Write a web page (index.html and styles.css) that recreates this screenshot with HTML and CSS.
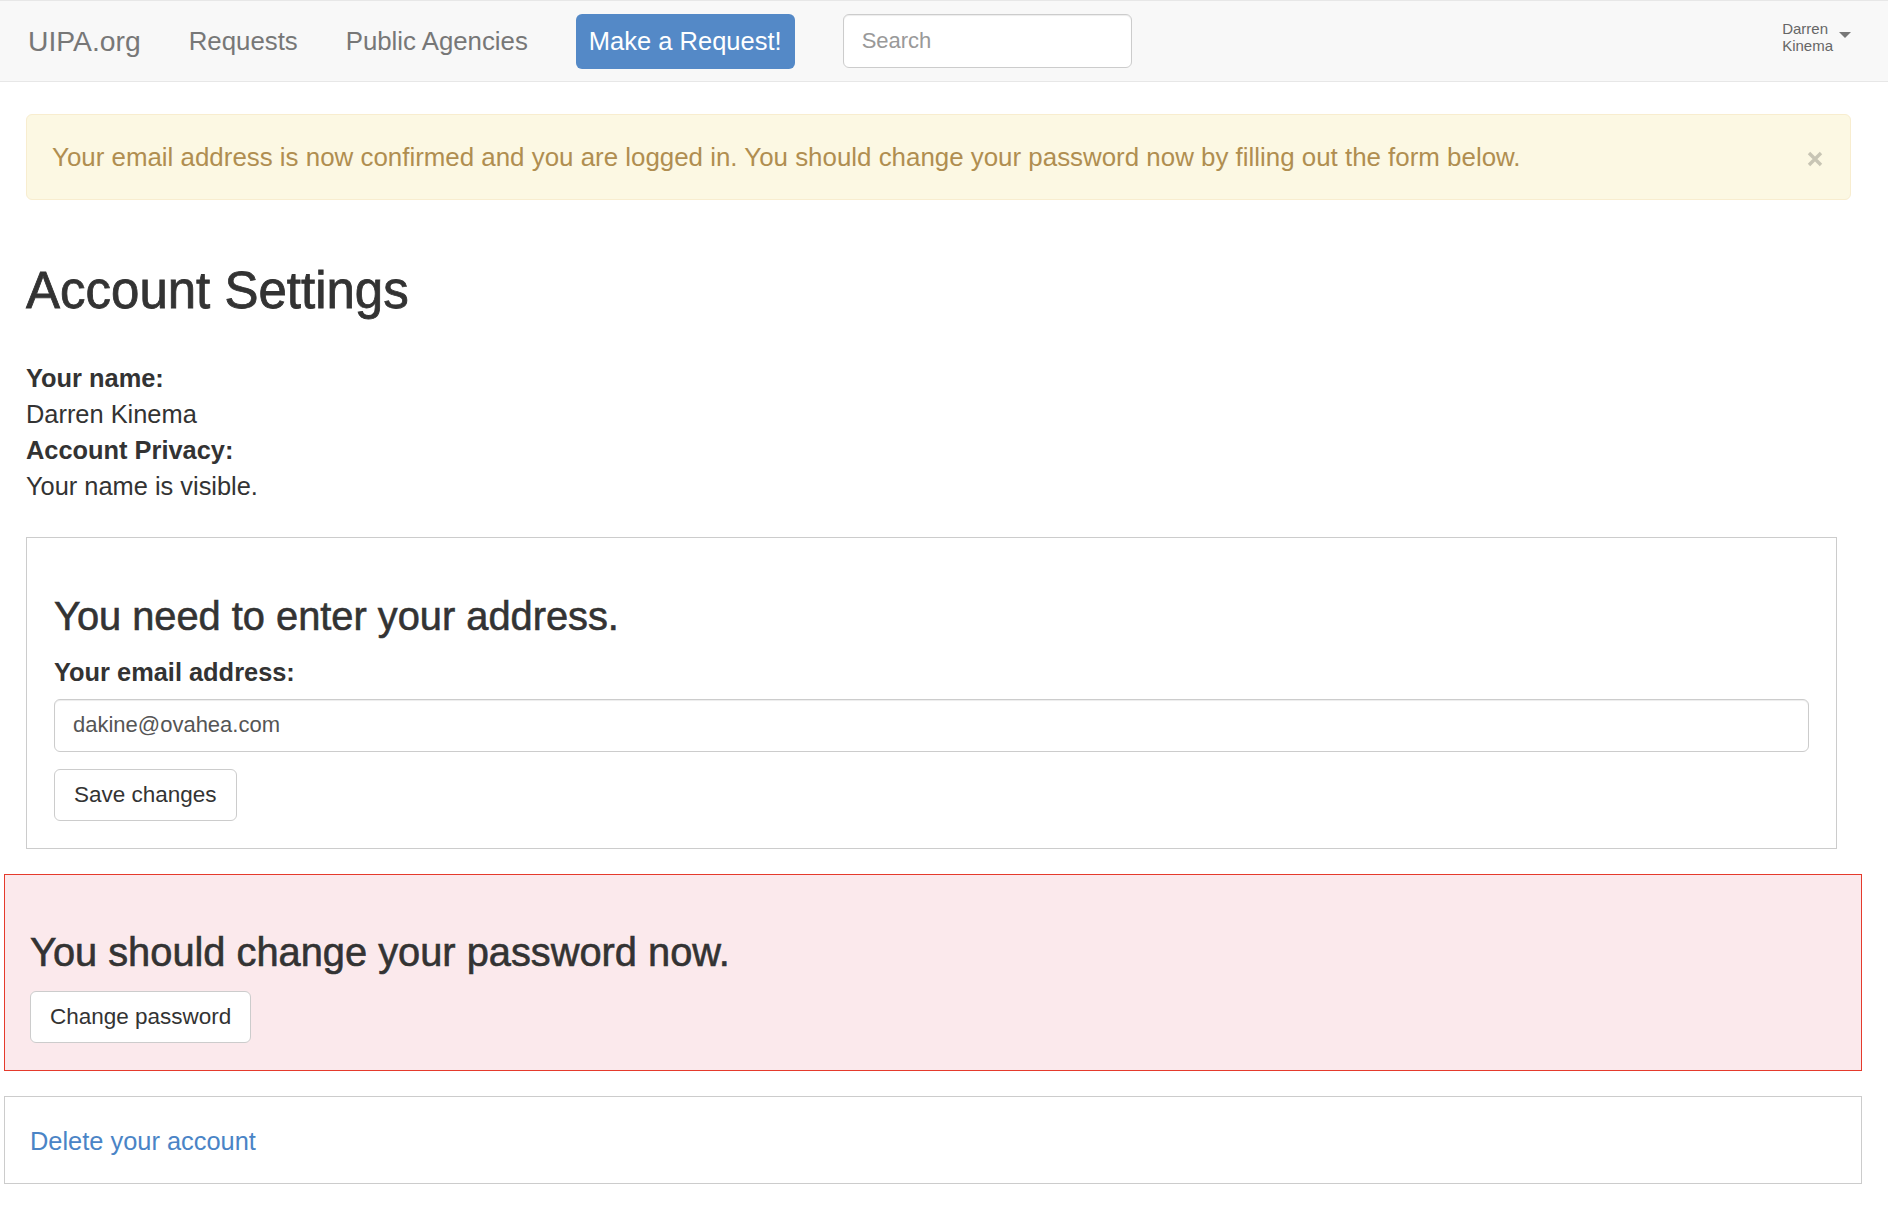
FILE: index.html
```html
<!DOCTYPE html>
<html lang="en">
<head>
<meta charset="utf-8">
<title>Account Settings - UIPA.org</title>
<link rel="stylesheet" href="styles.css">
</head>
<body>
<nav class="navbar">
  <a class="brand" href="#">UIPA.org</a>
  <ul class="nav-links">
    <li><a href="#">Requests</a></li>
    <li><a href="#">Public Agencies</a></li>
  </ul>
  <a class="btn-request" href="#">Make a Request!</a>
  <form class="search"><input class="search-input" type="text" placeholder="Search"></form>
  <div class="user">
    <span class="user-name">Darren<br>Kinema</span>
    <span class="caret"></span>
  </div>
</nav>
<main class="page">
  <div class="alert">
    <span class="alert-text">Your email address is now confirmed and you are logged in. You should change your password now by filling out the form below.</span>
    <button class="close" type="button" aria-label="Close">
      <svg width="16" height="16" viewBox="0 0 16 16"><path d="M2 2 L14 14 M14 2 L2 14" stroke="#000" stroke-width="3.4" stroke-linecap="butt"/></svg>
    </button>
  </div>
  <h1 class="page-title">Account Settings</h1>
  <div class="info">
    <div class="info-label">Your name:</div>
    <div>Darren Kinema</div>
    <div class="info-label">Account Privacy:</div>
    <div>Your name is visible.</div>
  </div>
  <section class="panel panel-address">
    <h3 class="panel-title">You need to enter your address.</h3>
    <label class="field-label" for="email">Your email address:</label>
    <input id="email" class="form-control" type="text" value="dakine@ovahea.com">
    <button class="btn btn-save" type="button">Save changes</button>
  </section>
  <section class="panel panel-danger">
    <h3 class="panel-title">You should change your password now.</h3>
    <button class="btn" type="button">Change password</button>
  </section>
  <section class="panel panel-delete">
    <a class="link" href="#">Delete your account</a>
  </section>
</main>
</body>
</html>
```

FILE: styles.css
```css
* { box-sizing: border-box; }

html, body {
  margin: 0;
  padding: 0;
  background: #fff;
}

body {
  font-family: "Liberation Sans", Arial, sans-serif;
  font-size: 25.4px;
  line-height: 36px;
  color: #333;
}

a { text-decoration: none; }

/* ---------- navbar ---------- */
.navbar {
  display: flex;
  align-items: center;
  gap: 48px;
  height: 82px;
  padding: 0 37px 0 28px;
  background: #f8f8f8;
  border-top: 1px solid #e7e7e7;
  border-bottom: 1px solid #e7e7e7;
}

.brand {
  font-size: 28.3px;
  line-height: 36px;
  color: #777;
}

.nav-links {
  display: flex;
  gap: 48px;
  margin: 0;
  padding: 0;
  list-style: none;
}

.nav-links a {
  font-size: 25.8px;
  line-height: 36px;
  color: #777;
}

.btn-request {
  display: flex;
  align-items: center;
  height: 55px;
  padding: 0 13px;
  font-size: 25.5px;
  color: #fff;
  background: #5489c7;
  border-radius: 6px;
}

.search { margin: 0; }

.search-input {
  display: block;
  width: 289px;
  height: 54px;
  padding: 0 18px;
  font-family: "Liberation Sans", Arial, sans-serif;
  font-size: 22px;
  color: #555;
  background: #fff;
  border: 1px solid #ccc;
  border-radius: 6px;
  box-shadow: inset 0 1px 1px rgba(0, 0, 0, 0.075);
  outline: none;
}

.search-input::placeholder { color: #999; }

.user {
  display: flex;
  align-self: flex-start;
  margin-top: 19px;
  margin-left: auto;
}

.user-name {
  font-size: 15px;
  line-height: 17px;
  color: #666;
}

.caret {
  width: 0;
  height: 0;
  margin-top: 12px;
  margin-left: 6px;
  border-top: 6px solid #777;
  border-left: 6px solid transparent;
  border-right: 6px solid transparent;
}

/* ---------- page ---------- */
.page {
  padding: 32px 37px 0 26px;
}

.alert {
  display: flex;
  align-items: center;
  justify-content: space-between;
  padding: 24px 27px 24px 25px;
  font-size: 25.9px;
  color: #b08e50;
  background: #fcf8e3;
  border: 1px solid #f8edcf;
  border-radius: 6px;
}

.close {
  display: flex;
  margin: 4px 0 0;
  padding: 0;
  background: none;
  border: 0;
  opacity: 0.2;
}

.page-title {
  margin: 63px 0 41px;
  font-size: 51px;
  font-weight: 400;
  line-height: 1.1;
  -webkit-text-stroke: 0.8px #333;
  color: #333;
}

.info-label { font-weight: 700; }

.panel {
  border: 1px solid #ccc;
  padding: 27px;
}

.panel-address {
  margin: 33px 14px 0 0;
}

.panel-title {
  margin: 30px 0 15px;
  font-size: 39.8px;
  font-weight: 400;
  line-height: 1.1;
  -webkit-text-stroke: 0.6px #333;
  color: #333;
}

.field-label {
  display: block;
  margin-bottom: 9px;
  font-weight: 700;
}

.form-control {
  display: block;
  width: 100%;
  height: 53px;
  padding: 0 18px;
  font-family: "Liberation Sans", Arial, sans-serif;
  font-size: 22px;
  color: #555;
  background: #fff;
  border: 1px solid #ccc;
  border-radius: 6px;
  box-shadow: inset 0 1px 1px rgba(0, 0, 0, 0.075);
  outline: none;
}

.btn {
  display: block;
  height: 52px;
  padding: 0 19px;
  font-family: "Liberation Sans", Arial, sans-serif;
  font-size: 22.5px;
  line-height: 30px;
  color: #333;
  background: #fff;
  border: 1px solid #ccc;
  border-radius: 6px;
}

.btn-save { margin-top: 17px; }

.panel-danger {
  margin: 25px -11px 0 -22px;
  padding: 27px 25px 27px 25px;
  background: #fbe9ec;
  border-color: #e53a2c;
}

.panel-danger .panel-title { margin: 29px 0 16px; }

.panel-delete {
  margin: 25px -11px 0 -22px;
  padding: 26px 25px 24px;
}

.link { color: #4a84c6; }
```
